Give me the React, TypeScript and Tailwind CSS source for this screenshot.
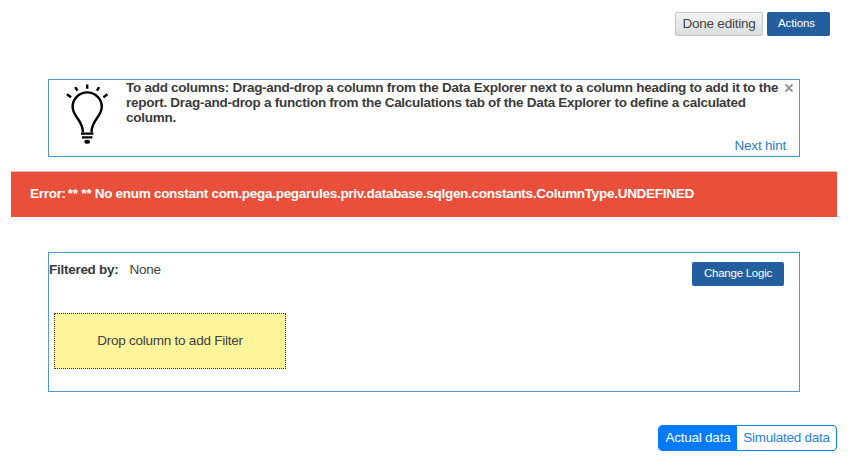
import { useState } from 'react';

function BulbIcon() {
    return (
        <svg className="w-11 h-16 shrink-0" viewBox="65 82 44 64" fill="none" stroke="#000" strokeLinecap="butt">
            <path d="M82.9 132.4C82.9 119.5 72.6 117 72.6 106.8A14.6 14.4 0 0 1 101.8 106.8C101.8 117 91.5 119.5 91.5 132.4" strokeWidth="2.4" />
            <path d="M87.2 84.6v4.2M75.2 87.1l2.3 3.6M99.2 87.1l-2.3 3.6M67 94.3l4 3M107.4 94.3l-4 3" strokeWidth="2.4" />
            <path d="M81 133.6h12.4M82 137.4h10.4" strokeWidth="2.2" />
            <ellipse cx="87.2" cy="141.8" rx="2.8" ry="2" fill="#000" stroke="none" />
        </svg>
    );
}

export default function ReportEditor() {
    const [showSimulated, setShowSimulated] = useState(false);

    return (
        <div className="h-[460px] w-[852px] overflow-hidden bg-white pt-3 font-['Liberation_Sans',Arial,sans-serif] text-[13.5px] tracking-[-0.25px] text-[#404040]">
            <div className="flex h-6 justify-end gap-1 pr-[22px]">
                <button className="h-6 w-[88px] whitespace-nowrap rounded-[2px] border border-[#c4c6c6] bg-linear-to-b from-[#f4f5f5] to-[#d9dddd] leading-[22px] text-[#444]">
                    Done editing
                </button>
                <button className="h-6 w-[63px] rounded-[2px] bg-[#235f9f] pr-1 text-[11.5px] tracking-[-0.1px] text-white">Actions</button>
            </div>

            {/* Hint */}
            <section className="mx-12 mt-[43px] flex h-[78px] w-[752px] border border-[#4e98cf]">
                <div className="w-[77px] shrink-0 pl-4 pt-0.5">
                    <BulbIcon />
                </div>
                <div className="flex flex-1 flex-col">
                    <p className="whitespace-nowrap font-bold leading-[15px] tracking-[-0.27px] text-[#3b3b3b]">
                        To add columns: Drag-and-drop a column from the Data Explorer next to a column heading to add it to the
                        <br />
                        report. Drag-and-drop a function from the Calculations tab of the Data Explorer to define a calculated
                        <br />
                        column.
                    </p>
                    <a href="#" className="mr-[11px] mt-3 self-end leading-[18px] tracking-[-0.2px] text-[#2b7ccb]">Next hint</a>
                </div>
                <button className="-ml-4 mr-0.5 flex h-[15px] w-4 shrink-0 items-center justify-center" aria-label="Close">
                    <svg className="h-2 w-2" viewBox="0 0 8 8" stroke="#8e8e8e" strokeWidth="1.8">
                        <path d="M.5.5l7 7M7.5.5l-7 7" />
                    </svg>
                </button>
            </section>

            <div className="ml-[11px] mt-3.5 flex h-[46px] w-[826px] items-center border-t border-[#e7bdb5] bg-[#e94f3a] bg-clip-padding pl-[19px] font-bold tracking-[-0.28px] text-white">
                <span className="mr-0.5">Error:</span>
                <span className="whitespace-nowrap">** ** No enum constant com.pega.pegarules.priv.database.sqlgen.constants.ColumnType.UNDEFINED</span>
            </div>

            {/* Filters */}
            <section className="mx-12 mt-[35px] h-[140px] w-[752px] border border-[#4e98cf]">
                <div className="flex h-[60px] items-start justify-between pr-[15px]">
                    <div className="flex gap-[11px] pt-[9px] leading-[15px]">
                        <span className="font-bold tracking-[-0.27px] text-[#3b3b3b]">Filtered by:</span>
                        <span>None</span>
                    </div>
                    <button className="mt-[9px] h-6 w-[92px] rounded-[2px] bg-[#235f9f] text-[11.5px] text-white">Change Logic</button>
                </div>
                <div className="ml-[5px] flex h-14 w-[232px] items-center justify-center border border-dotted border-[#333] bg-[#fff59a]">
                    Drop column to add Filter
                </div>
            </section>

            <div className="mt-[33px] flex justify-end pr-[15px]">
                <div className="flex h-[26px] w-[179px] overflow-hidden rounded-[4px] border border-[#0a7bff]">
                    <button
                        className={`w-[78px] whitespace-nowrap ${showSimulated ? 'text-[#1f7fe8]' : 'bg-[#007bff] text-white'}`}
                        onClick={() => setShowSimulated(false)}
                    >
                        Actual data
                    </button>
                    <button
                        className={`flex-1 whitespace-nowrap ${showSimulated ? 'bg-[#007bff] text-white' : 'text-[#1f7fe8]'}`}
                        onClick={() => setShowSimulated(true)}
                    >
                        Simulated data
                    </button>
                </div>
            </div>
        </div>
    );
}
